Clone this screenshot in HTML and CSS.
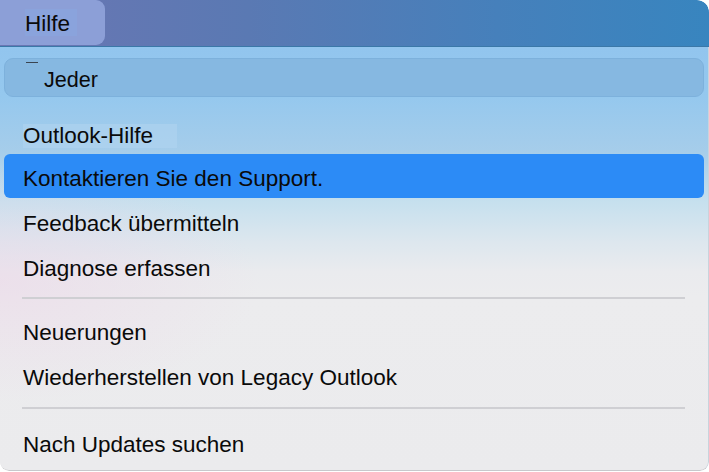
FILE: index.html
```html
<!DOCTYPE html>
<html lang="de">
<head>
<meta charset="utf-8">
<title>Hilfe</title>
<link rel="stylesheet" href="styles.css">
</head>
<body>
<div class="window">
  <div class="topbar">
    <div class="tab"><span class="tab-label">Hilfe</span></div>
  </div>
  <div class="menu">
    <div class="search">
      <span class="dash"></span>
      <span class="search-text">Jeder</span>
    </div>
    <div class="item item-first"><span class="label label-box">Outlook-Hilfe</span></div>
    <div class="item item-active"><span class="label">Kontaktieren Sie den Support.</span></div>
    <div class="item"><span class="label">Feedback übermitteln</span></div>
    <div class="item"><span class="label">Diagnose erfassen</span></div>
    <div class="sep"></div>
    <div class="item"><span class="label">Neuerungen</span></div>
    <div class="item"><span class="label">Wiederherstellen von Legacy Outlook</span></div>
    <div class="sep sep-second"></div>
    <div class="item"><span class="label">Nach Updates suchen</span></div>
  </div>
</div>
</body>
</html>
```
FILE: styles.css
```css
html, body {
  margin: 0;
  padding: 0;
  background: #ffffff;
}
body {
  font-family: "Liberation Sans", Arial, sans-serif;
  color: #0a0a0a;
}
.window {
  width: 709px;
  height: 471px;
  display: flex;
  flex-direction: column;
  border-radius: 0 12px 9px 9px;
  overflow: hidden;
}
.topbar {
  height: 46px;
  flex: 0 0 46px;
  background: linear-gradient(90deg, #6b76b3 0%, #5a79b3 35%, #4680bb 70%, #3885bf 100%);
  border-bottom: 1px solid #3b78a8;
  display: flex;
  border-top-right-radius: 12px;
}
.tab {
  width: 105px;
  height: 45px;
  background: #8c9fd7;
  border-radius: 0 9px 9px 0;
  display: flex;
  align-items: center;
  padding-left: 25px;
  box-sizing: border-box;
}
.tab-label {
  font-size: 22.5px;
  line-height: 25px;
  padding-top: 2px;
  padding-right: 7px;
  background: #8aa3dc;
}
.menu {
  flex: 1;
  padding: 0 4px 0 4px;
  border-right: 1.5px solid #c9d3dc;
  border-bottom: 1px solid #c8c8cc;
  border-radius: 0 0 9px 9px;
  background:
    radial-gradient(ellipse 260px 120px at 0px 235px, rgba(236, 214, 232, 0.55), rgba(236, 214, 232, 0) 100%),
    linear-gradient(180deg, #92c5ee 0px, #95c8ee 50px, #a6cdea 105px, #c6e0ee 155px, #dde7ee 195px, #eaebee 225px, #ececee 250px, #ebebed 100%);
}
.search {
  margin-top: 11px;
  height: 39px;
  box-sizing: border-box;
  border: 1px solid #7db1dc;
  border-radius: 9px;
  background: #86b8e1;
  display: flex;
  align-items: center;
  padding-left: 39px;
  position: relative;
}
.dash {
  position: absolute;
  left: 21px;
  top: 3px;
  width: 12px;
  height: 1px;
  background: #3a4450;
}
.search-text {
  font-size: 21.6px;
  padding-top: 4px;
}
.item {
  height: 45px;
  box-sizing: border-box;
  padding: 6px 0 0 19px;
  font-size: 22.5px;
  line-height: 39px;
  white-space: nowrap;
}
.item-first {
  margin-top: 14px;
  height: 43px;
  padding-top: 5px;
}
.item-active {
  height: 44px;
  background: #2c8bf6;
  border-radius: 6px;
  line-height: 38px;
}
.label-box {
  display: inline-block;
  line-height: 24px;
  padding-right: 24px;
  background: rgba(176, 212, 240, 0.6);
}
.sep {
  height: 2px;
  margin: 9px 19px 8px 18px;
  background: #cfcfd3;
}
.sep-second {
  margin: 10px 19px 10px 18px;
}
```
